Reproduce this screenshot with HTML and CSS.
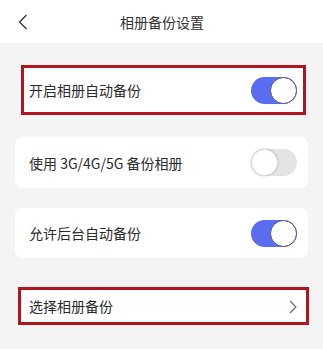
FILE: index.html
```html
<!DOCTYPE html>
<html lang="zh">
<head>
<meta charset="utf-8">
<link rel="stylesheet" href="styles.css">
</head>
<body>
<header class="header">
  <svg class="back" width="10" height="16" viewBox="0 0 10 16"><path d="M8.5 1 L1.5 8 L8.5 15" fill="none" stroke="#333" stroke-width="1.3"/></svg>
  <div class="title">相册备份设置</div>
</header>
<main class="list">
  <div class="card card-1 marked">
    <span class="label">开启相册自动备份</span>
    <span class="switch on"><span class="knob"></span></span>
  </div>
  <div class="card card-2">
    <span class="label">使用 3G/4G/5G 备份相册</span>
    <span class="switch off"><span class="knob"></span></span>
  </div>
  <div class="card card-3">
    <span class="label">允许后台自动备份</span>
    <span class="switch on"><span class="knob"></span></span>
  </div>
  <div class="card card-4 marked">
    <span class="label">选择相册备份</span>
    <svg class="chev" width="8" height="14" viewBox="0 0 8 14"><path d="M1 1 L7 7 L1 13" fill="none" stroke="#666" stroke-width="1.1"/></svg>
  </div>
</main>
</body>
</html>
```
FILE: styles.css
```css
html, body {
  margin: 0;
  padding: 0;
  background: #f4f4f4;
  width: 323px;
  height: 349px;
  overflow: hidden;
  font-family: "Noto Sans CJK SC", "Noto Sans", sans-serif;
  color: #2b2b2b;
}
.header {
  height: 43px;
  background: #ffffff;
  display: flex;
  align-items: center;
  justify-content: center;
  position: relative;
}
.back {
  position: absolute;
  left: 18px;
  top: 14px;
}
.title {
  font-size: 14px;
  color: #333;
  margin-top: 1px;
  margin-left: 1px;
}
.list {
  display: flex;
  flex-direction: column;
}
.card {
  background: #ffffff;
  display: flex;
  align-items: center;
  justify-content: space-between;
  box-sizing: border-box;
  font-size: 14px;
}
.label { line-height: 1; }
.card.marked {
  border: 3px solid #b3151f;
  border-radius: 0;
}
.card-1 {
  margin: 22px 0 0 21px;
  width: 285px;
  height: 50px;
  padding: 0 6px 0 5px;
}
.card-2 {
  margin: 22px 0 0 15px;
  width: 293px;
  height: 51px;
  border-radius: 8px;
  padding: 0 11px 0 14px;
}
.card-3 {
  margin: 20px 0 0 15px;
  width: 293px;
  height: 50px;
  border-radius: 8px;
  padding: 0 11px 0 14px;
}
.card-4 {
  margin: 29px 0 0 18px;
  width: 291px;
  height: 38px;
  padding: 0 9px 0 8px;
}
.switch {
  width: 46px;
  height: 27px;
  border-radius: 14px;
  display: flex;
  align-items: center;
  box-sizing: border-box;
  position: relative;
}
.switch.on {
  background: #5a6cf0;
  justify-content: flex-end;
}
.switch.off {
  background: #e4e4e4;
  justify-content: flex-start;
}
.knob {
  width: 27px;
  height: 27px;
  border-radius: 50%;
  background: #ffffff;
  box-sizing: border-box;
}
.switch.on .knob {
  border: 1.3px solid #4d537a;
}
.switch.off .knob {
  box-shadow: 0 0 2px rgba(0,0,0,0.25);
  border: 1px solid #e0e0e0;
}
.chev { margin-top: 1px; }
```
